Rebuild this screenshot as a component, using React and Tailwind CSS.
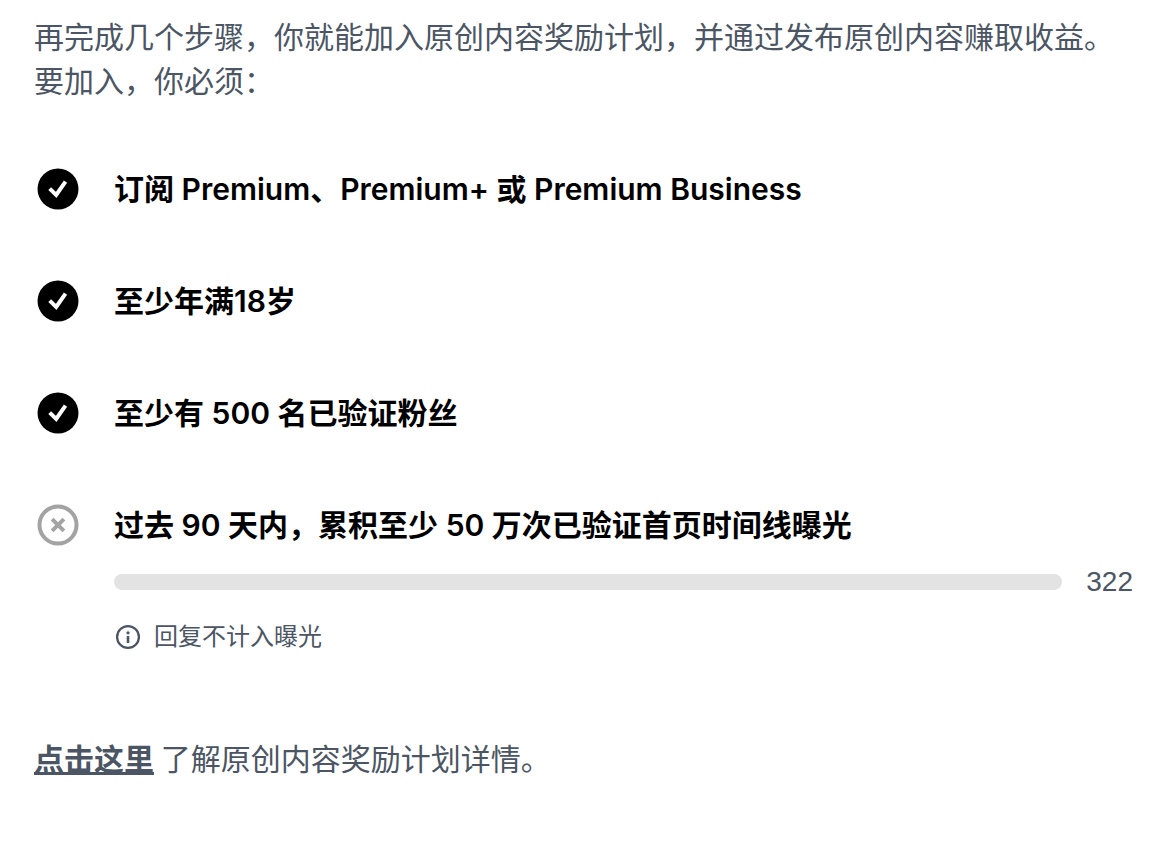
import React from "react";

const requirements = [
  { text: "订阅 Premium、Premium+ 或 Premium Business" },
  { text: "至少年满18岁" },
  { text: "至少有 500 名已验证粉丝" },
];

function CheckIcon() {
  return (
    <svg className="size-12 shrink-0" viewBox="0 0 48 48" aria-hidden="true">
      <circle cx="24" cy="24" r="20.5" fill="#000" />
      <path d="M15.7 23.6l6.5 6.3 9.3-13.2" fill="none" stroke="#fff" strokeWidth="4" />
    </svg>
  );
}

function CrossIcon() {
  return (
    <svg className="size-12 shrink-0" viewBox="0 0 48 48" aria-hidden="true">
      <circle cx="24" cy="24" r="18.5" fill="none" stroke="#a3a3a3" strokeWidth="4" />
      <path d="M18.1 18.1l11.8 11.8M29.9 18.1l-11.8 11.8" fill="none" stroke="#a3a3a3" strokeWidth="4" />
    </svg>
  );
}

function InfoIcon() {
  return (
    <svg className="size-7 shrink-0" viewBox="0 0 28 28" aria-hidden="true">
      <circle cx="14" cy="14" r="10.9" fill="none" stroke="#4b5563" strokeWidth="2.3" />
      <circle cx="14" cy="9.8" r="1.6" fill="#4b5563" />
      <path d="M14 13v7" fill="none" stroke="#4b5563" strokeWidth="2.6" />
    </svg>
  );
}

export default function App() {
  return (
    <main
      lang="zh-CN"
      className="min-h-screen bg-white pt-[13px] pr-[26px] pl-[34px] font-['Noto_Sans_CJK_SC',sans-serif] text-[30px] leading-[44px] text-[#4b5563]"
    >
      <p>再完成几个步骤，你就能加入原创内容奖励计划，并通过发布原创内容赚取收益。要加入，你必须：</p>
      <ul className="mt-16 flex flex-col gap-16 font-['Inter','Noto_Sans_CJK_SC',sans-serif] font-semibold text-black">
        {requirements.map((item) => (
          <li key={item.text} className="flex items-center gap-8">
            <CheckIcon />
            <span>{item.text}</span>
          </li>
        ))}
        <li className="flex items-start gap-8">
          <CrossIcon />
          <div className="min-w-0 flex-1">
            <h2 className="leading-[48px]">过去 90 天内，累积至少 50 万次已验证首页时间线曝光</h2>
            <div className="mt-[17px] flex items-center gap-6 font-normal text-[#4b5563]">
              <div role="progressbar" aria-label="已验证首页时间线曝光" aria-valuenow={322} aria-valuemin={0} aria-valuemax={500000} className="h-4 flex-1 rounded-full bg-[#e3e3e3]" />
              <span className="font-['Liberation_Sans',sans-serif] text-[28px] leading-8">322</span>
            </div>
            <p className="mt-[23px] flex items-center gap-3 text-2xl font-normal text-[#4b5563]">
              <InfoIcon />
              <span>回复不计入曝光</span>
            </p>
          </div>
        </li>
      </ul>
      <p className="mt-[82px]">
        <a href="#details" className="font-bold underline decoration-[3px]">点击这里</a> 了解原创内容奖励计划详情。
      </p>
    </main>
  );
}
